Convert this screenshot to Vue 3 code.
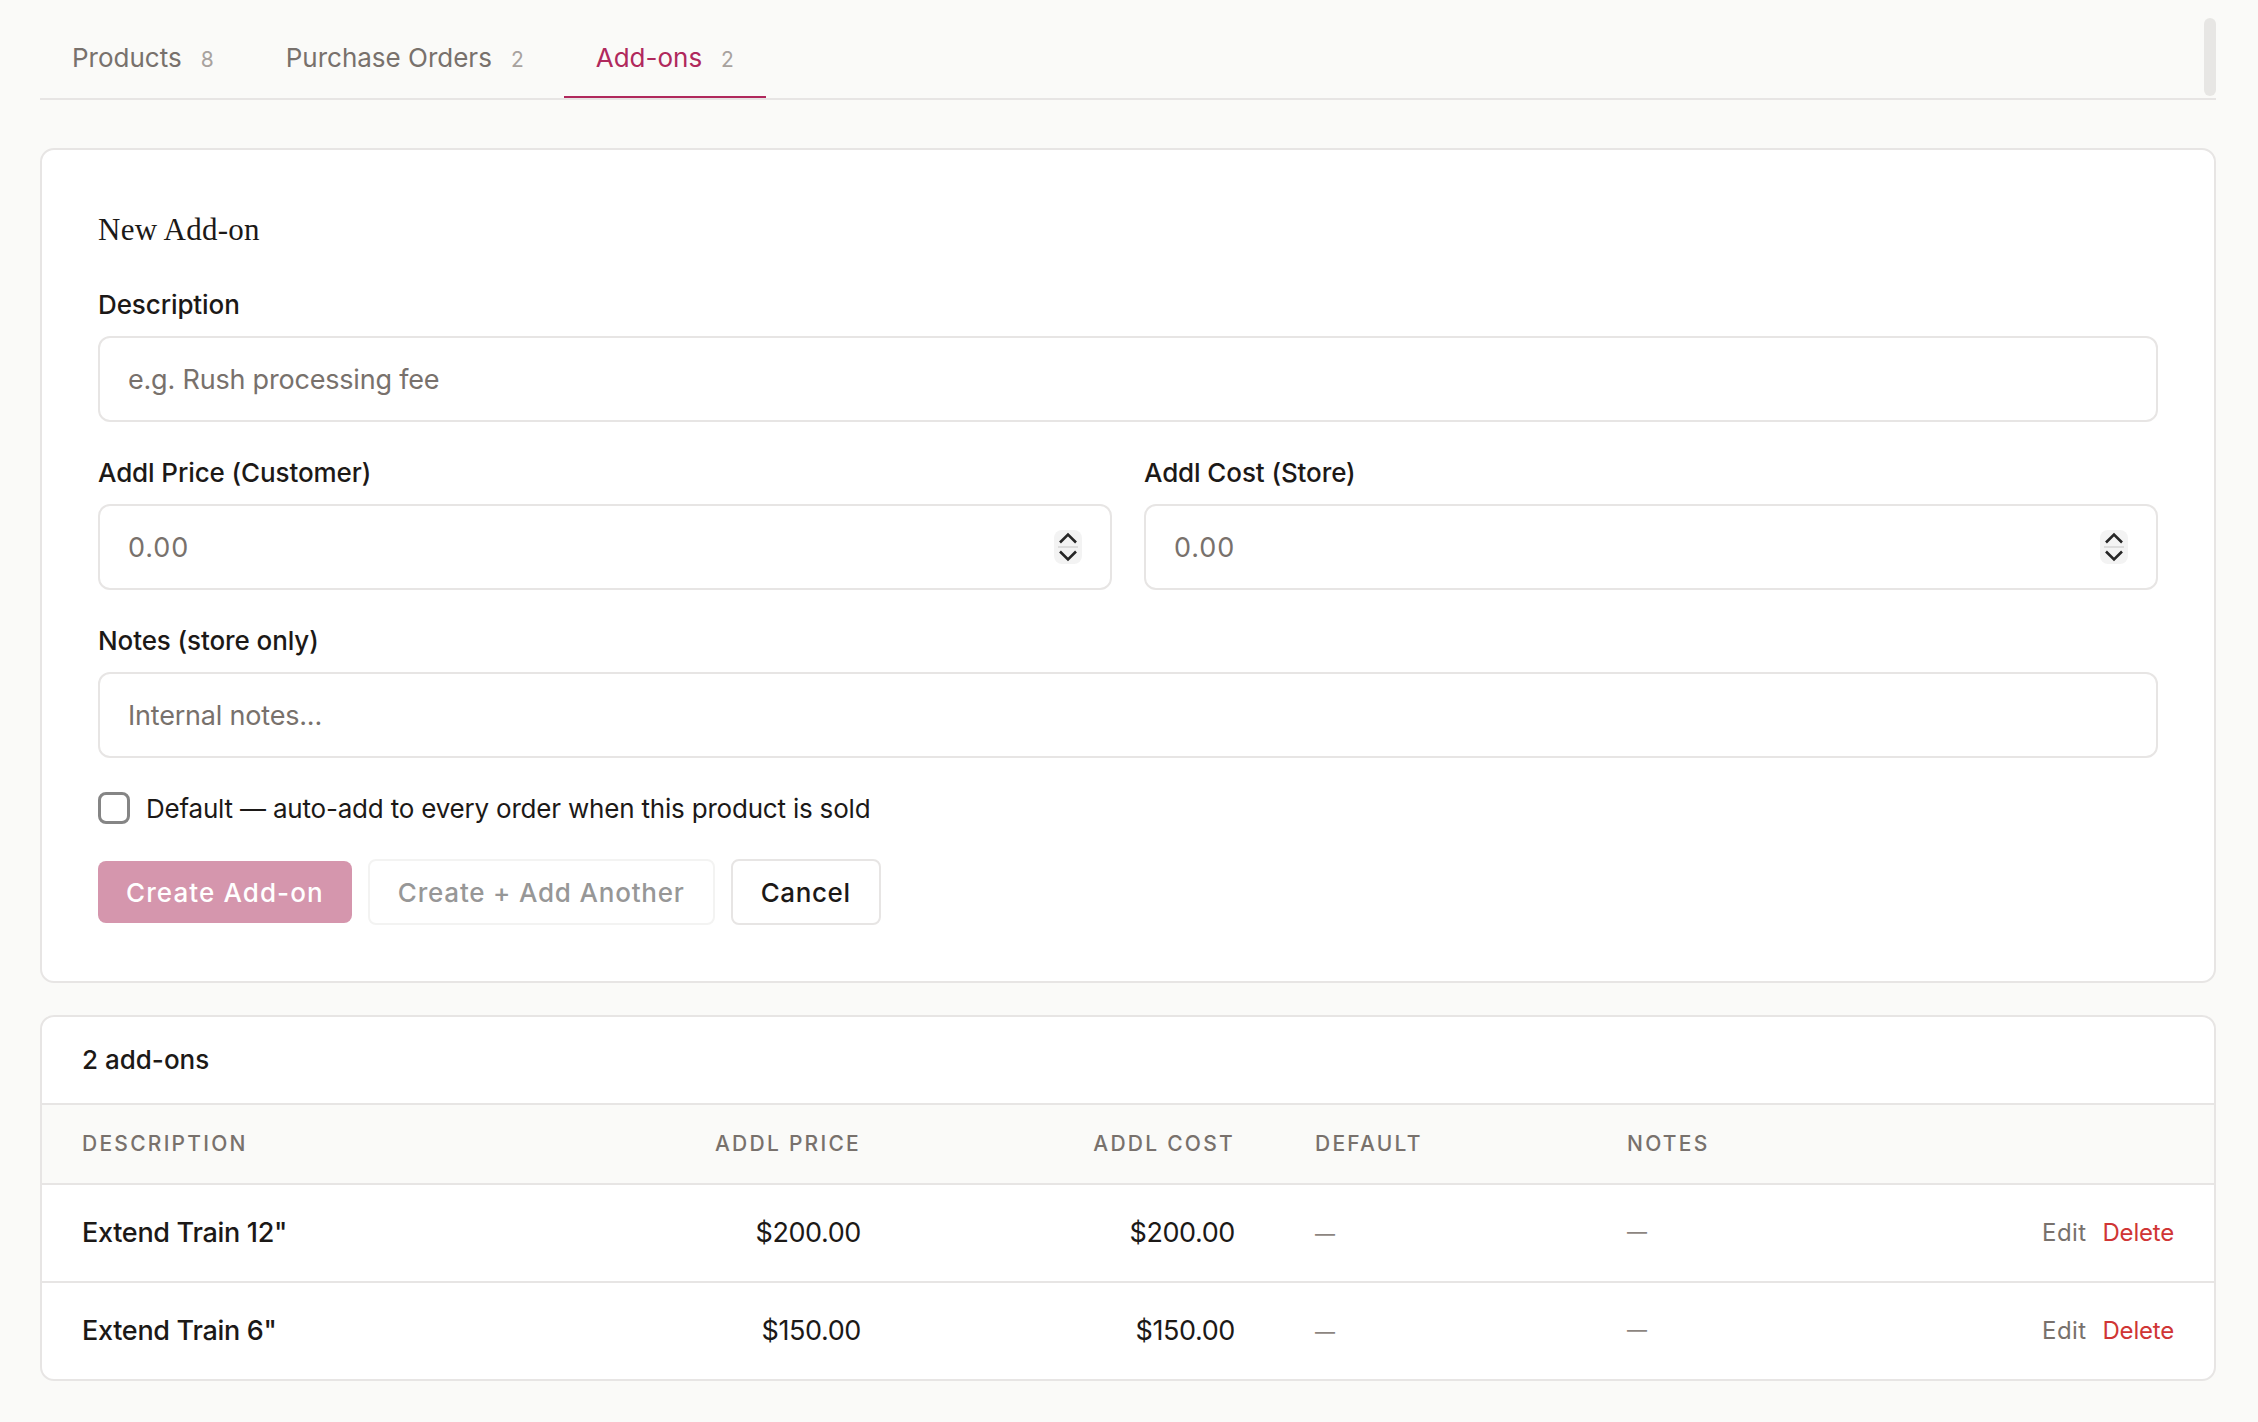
<template>
  <div class="page">
    <div class="scroll-thumb"></div>
    <nav class="tabs">
      <a
        v-for="tab in tabs"
        :key="tab.name"
        class="tab"
        :class="{ active: tab.name === activeTab }"
      >
        {{ tab.name }}<span class="tab-count">{{ tab.count }}</span>
      </a>
    </nav>

    <section class="card form-card">
      <h3 class="form-title">New Add-on</h3>
      <form @submit.prevent>
        <div class="form-group">
          <label>Description</label>
          <input class="field" type="text" placeholder="e.g. Rush processing fee" />
        </div>
        <div class="form-row">
          <div v-for="money in moneyFields" :key="money" class="form-group">
            <label>{{ money }}</label>
            <div class="field number-field">
              <input type="text" placeholder="0.00" />
              <svg class="spinner" width="28" height="34" viewBox="0 0 28 34">
                <rect width="28" height="34" rx="8" fill="#f3f3f3" />
                <path d="M6 12.5 14 4.5 22 12.5" fill="none" stroke="#262626" stroke-width="2.6" />
                <path d="M4 17h20" stroke="#dcdcdc" stroke-width="2" />
                <path d="M6 21.5 14 29.5 22 21.5" fill="none" stroke="#262626" stroke-width="2.6" />
              </svg>
            </div>
          </div>
        </div>
        <div class="form-group">
          <label>Notes (store only)</label>
          <input class="field" type="text" placeholder="Internal notes..." />
        </div>
        <label class="check-row">
          <input type="checkbox" />
          <span>Default — auto-add to every order when this product is sold</span>
        </label>
        <div class="actions">
          <button class="btn primary" type="button">Create Add-on</button>
          <button class="btn ghost" type="button">Create + Add Another</button>
          <button class="btn cancel" type="button">Cancel</button>
        </div>
      </form>
    </section>

    <section class="card list-card">
      <div class="list-count">2 add-ons</div>
      <table>
        <colgroup>
          <col style="width: 560px" />
          <col style="width: 299px" />
          <col style="width: 374px" />
          <col style="width: 312px" />
          <col style="width: 312px" />
          <col />
        </colgroup>
        <thead>
          <tr>
            <th>Description</th>
            <th class="num">Addl Price</th>
            <th class="num">Addl Cost</th>
            <th>Default</th>
            <th>Notes</th>
            <th></th>
          </tr>
        </thead>
        <tbody>
          <tr v-for="row in addons" :key="row.name">
            <td class="name">{{ row.name }}</td>
            <td class="num">{{ row.price }}</td>
            <td class="num">{{ row.cost }}</td>
            <td class="muted"><span class="low-dash">—</span></td>
            <td class="muted">—</td>
            <td class="row-actions">
              <a class="edit">Edit</a>
              <a class="delete">Delete</a>
            </td>
          </tr>
        </tbody>
      </table>
    </section>
  </div>
</template>

<script setup>
const activeTab = 'Add-ons'

const tabs = [
  { name: 'Products', count: 8 },
  { name: 'Purchase Orders', count: 2 },
  { name: 'Add-ons', count: 2 }
]

const moneyFields = ['Addl Price (Customer)', 'Addl Cost (Store)']

const addons = [
  { name: 'Extend Train 12"', price: '$200.00', cost: '$200.00' },
  { name: 'Extend Train 6"', price: '$150.00', cost: '$150.00' }
]
</script>

<style>
html,
body {
  background: #fafaf8;
}
</style>

<style scoped>
.page {
  position: relative;
  box-sizing: border-box;
  min-height: 1422px;
  padding: 18px 42px 40px 40px;
  background: #fafaf8;
  color: #1c1917;
  font-family: Inter, "Liberation Sans", sans-serif;
  font-size: 26px;
}

.scroll-thumb {
  position: absolute;
  top: 18px;
  left: 2204px;
  width: 12px;
  height: 78px;
  border-radius: 6px;
  background: #e7e6e4;
}

.tabs {
  display: flex;
  gap: 8px;
  border-bottom: 2px solid #e7e5e4;
}

.tab {
  box-sizing: border-box;
  height: 80px;
  padding: 24px 32px 0;
  border-bottom: 2px solid transparent;
  color: #78716c;
  font-size: 26px;
  line-height: 32px;
}

.tab.active {
  border-bottom-color: #b0285c;
  color: #b0285c;
}

.tab-count {
  margin-left: 19px;
  color: #a8a29e;
  font-size: 21px;
}

.card {
  background: #fff;
  border: 2px solid #e7e5e4;
  border-radius: 14px;
}

.form-card {
  margin-top: 48px;
  padding: 56px;
}

.form-title {
  margin: 0 0 34px;
  font-family: "Liberation Serif", serif;
  font-size: 31px;
  font-weight: 400;
  line-height: 48px;
  letter-spacing: 0.25px;
}

.form-group {
  flex: 1;
  margin-bottom: 34px;
}

.form-group > label {
  display: block;
  margin-bottom: 14px;
  font-size: 26px;
  font-weight: 450;
  line-height: 34px;
  letter-spacing: -0.1px;
}

.form-row {
  display: flex;
  gap: 32px;
}

.field {
  display: block;
  box-sizing: border-box;
  width: 100%;
  height: 86px;
  padding: 0 28px;
  border: 2px solid #e7e5e4;
  border-radius: 12px;
  outline: none;
  background: #fff;
  color: #1c1917;
  font: inherit;
  font-size: 27px;
  letter-spacing: -0.2px;
}

.field::placeholder,
.number-field input::placeholder {
  color: #78716c;
  opacity: 1;
}

.number-field {
  display: flex;
  align-items: center;
  padding-right: 28px;
}

.number-field input {
  flex: 1;
  min-width: 0;
  padding: 0;
  border: none;
  outline: none;
  font: inherit;
  letter-spacing: 0.9px;
}

.check-row {
  display: flex;
  align-items: center;
  gap: 16px;
  height: 32px;
  margin: 34px 0 35px;
  font-size: 26px;
  letter-spacing: -0.2px;
}

.check-row input {
  flex: none;
  box-sizing: border-box;
  width: 32px;
  height: 32px;
  margin: 0;
  border: 3px solid #858585;
  border-radius: 8px;
  appearance: none;
  background: #fff;
}

.actions {
  display: flex;
  align-items: center;
  gap: 16px;
}

.btn {
  box-sizing: border-box;
  height: 66px;
  padding: 0 28px;
  border: 2px solid #e7e5e4;
  border-radius: 8px;
  background: #fff;
  color: #1c1917;
  font: inherit;
  font-size: 26px;
  font-weight: 500;
  letter-spacing: 0.95px;
}

.btn.primary {
  height: 62px;
  border: none;
  background: #d596ad;
  color: #fff;
  letter-spacing: 1.1px;
}

.btn.ghost {
  border-color: #f3f3f2;
  color: #979797;
  letter-spacing: 0.8px;
}

.btn.cancel {
  letter-spacing: 0.6px;
}

.list-card {
  margin-top: 32px;
  overflow: hidden;
}

.list-count {
  height: 86px;
  padding: 0 40px;
  font-size: 26px;
  font-weight: 450;
  line-height: 86px;
}

table {
  width: 100%;
  border-collapse: collapse;
  table-layout: fixed;
}

th {
  height: 76px;
  padding: 0 40px 2px;
  background: #fafaf8;
  border-top: 2px solid #e7e5e4;
  border-bottom: 2px solid #e7e5e4;
  color: #78716c;
  font-size: 21px;
  font-weight: 500;
  text-align: left;
  text-transform: uppercase;
  letter-spacing: 2.25px;
}

td {
  height: 94px;
  padding: 0 40px 2px;
  border-bottom: 2px solid #e7e5e4;
  font-size: 27px;
  letter-spacing: -0.4px;
}

tbody tr:last-child td {
  border-bottom: none;
}

.num {
  text-align: right;
}

.name {
  font-weight: 450;
  letter-spacing: -0.3px;
}

.muted {
  color: #8c8580;
  font-size: 20px;
}

.low-dash {
  vertical-align: -3px;
}

.row-actions {
  text-align: right;
  white-space: nowrap;
  font-size: 24px;
  letter-spacing: -0.2px;
}

.edit {
  margin-right: 16px;
  color: #78716c;
  letter-spacing: 0.4px;
}

.delete {
  color: #d03535;
}
</style>
